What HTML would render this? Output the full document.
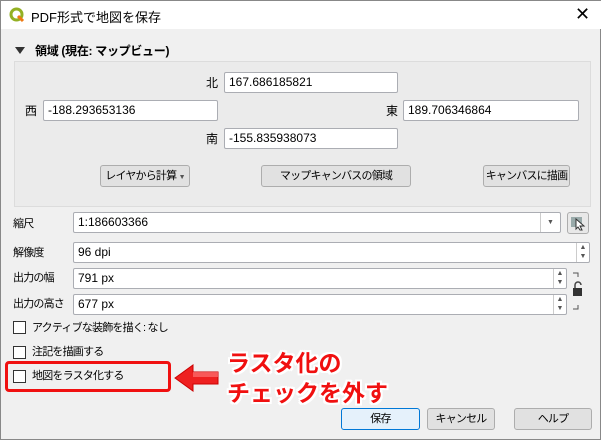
<!DOCTYPE html>
<html><head><meta charset="utf-8"><style>
*{box-sizing:border-box;margin:0;padding:0}
body{width:601px;height:440px;background:#f0f0f0;font-family:"Liberation Sans","Noto Sans CJK JP",sans-serif;font-size:12px;color:#000;position:relative;overflow:hidden;border:1px solid #888}
.a{position:absolute;white-space:nowrap}
.j{font-size:11px;letter-spacing:-0.8px}
.inp{position:absolute;background:#fff;border:1px solid #abadb3;border-radius:2px;height:21px;line-height:19px;padding-left:4px;font-size:12px}
.btn{position:absolute;background:#e1e1e1;border:1px solid #adadad;border-radius:3px;height:22px;line-height:20px;text-align:center;font-size:11px;letter-spacing:-0.8px;white-space:nowrap}
.spin{position:absolute;right:0;top:0;width:13px;height:100%;border-left:1px solid #ccc;font-size:7px;line-height:9px;text-align:center;color:#555;letter-spacing:0}
.cb{position:absolute;width:13px;height:13px;border:1px solid #333;background:#fff}
.red{position:absolute;white-space:nowrap;color:#f01010;font-weight:bold;font-size:23px;letter-spacing:0px;text-shadow:-2px 0 #fff,2px 0 #fff,0 -2px #fff,0 2px #fff,-2px -2px #fff,2px 2px #fff,-2px 2px #fff,2px -2px #fff}
</style></head><body>
<div class="a" style="left:0;top:0;width:601px;height:28px;background:#fff"></div>
<svg class="a" style="left:8px;top:6px" width="16" height="16"><circle cx="7.5" cy="7.5" r="5.5" fill="none" stroke="#93b023" stroke-width="3"/><path d="M9 9 L14 14" stroke="#ee7913" stroke-width="3"/></svg>
<div class="a" style="left:30px;top:6px;font-size:13px">PDF形式で地図を保存</div>
<div class="a" style="left:574px;top:3px;font-size:18px">✕</div>
<svg class="a" style="left:14px;top:46px" width="10" height="8"><path d="M0 0H10L5 7Z" fill="#333"/></svg>
<div class="a" style="left:34px;top:41px;font-weight:bold;font-size:12px;letter-spacing:-0.3px">領域 (現在: マップビュー)</div>
<div class="a" style="left:13px;top:60px;width:577px;height:146px;border:1px solid #dcdcdc;background:#ebebeb"></div>
<div class="a" style="left:205px;top:73px">北</div><div class="inp" style="left:223px;top:71px;width:174px">167.686185821</div>
<div class="a" style="left:24px;top:101px">西</div><div class="inp" style="left:42px;top:99px;width:175px">-188.293653136</div>
<div class="a" style="left:385px;top:101px">東</div><div class="inp" style="left:402px;top:99px;width:176px">189.706346864</div>
<div class="a" style="left:205px;top:129px">南</div><div class="inp" style="left:223px;top:127px;width:174px">-155.835938073</div>
<div class="btn" style="left:99px;top:164px;width:90px">レイヤから計算 <span style="font-size:7px;color:#555">▼</span></div>
<div class="btn" style="left:260px;top:164px;width:150px">マップキャンバスの領域</div>
<div class="btn" style="left:482px;top:164px;width:87px">キャンバスに描画</div>
<div class="a j" style="left:12px;top:214px">縮尺</div>
<div class="inp" style="left:72px;top:211px;width:488px">1:186603366<div class="spin" style="width:20px;line-height:19px">▼</div></div>
<div class="btn" style="left:566px;top:211px;width:22px;height:22px;background:#e8e8e8"><svg width="16" height="16" style="margin-top:2px"><rect x="1" y="2" width="11" height="10" fill="#9aa" /><path d="M6 4L14 11L10 11L12 15L10 15L8 12L6 14Z" fill="#fff" stroke="#333"/></svg></div>
<div class="a j" style="left:12px;top:243px">解像度</div>
<div class="inp" style="left:72px;top:241px;width:517px">96 dpi<div class="spin">▲<br>▼</div></div>
<div class="a j" style="left:12px;top:268px">出力の幅</div>
<div class="inp" style="left:72px;top:267px;width:494px">791 px<div class="spin">▲<br>▼</div></div>
<div class="a j" style="left:12px;top:294px">出力の高さ</div>
<div class="inp" style="left:72px;top:293px;width:494px">677 px<div class="spin">▲<br>▼</div></div>
<svg class="a" style="left:570px;top:270px" width="14" height="40"><path d="M2 2H7V6M2 38H7V34" stroke="#555" fill="none"/><path d="M4 17V14A3 3 0 0 1 10 14" stroke="#444" stroke-width="1.5" fill="none"/><rect x="2" y="17" width="9" height="8" fill="#333"/></svg>
<div class="cb" style="left:12px;top:320px"></div><div class="a j" style="left:31px;top:318px">アクティブな装飾を描く: なし</div>
<div class="cb" style="left:12px;top:345px"></div><div class="a j" style="left:31px;top:342px">注記を描画する</div>
<div class="cb" style="left:12px;top:369px"></div><div class="a j" style="left:31px;top:366px">地図をラスタ化する</div>
<div class="a" style="left:4px;top:360px;width:166px;height:31px;border:3px solid #f01010;border-radius:4px"></div>
<svg class="a" style="left:172px;top:362px" width="48" height="30"><path d="M2 15L20 2V9H45V21H20V28Z" fill="#ee2020" stroke="#c00" stroke-width="1"/><path d="M20 9H45V14H20Z" fill="#ff8080" opacity=".6"/></svg>
<div class="red" style="left:226px;top:343px">ラスタ化の</div>
<div class="red" style="left:226px;top:373px">チェックを外す</div>
<div class="btn" style="left:340px;top:407px;width:79px;border-color:#0078d7;background:#e5f1fb">保存</div>
<div class="btn" style="left:426px;top:407px;width:68px">キャンセル</div>
<div class="btn" style="left:513px;top:407px;width:78px">ヘルプ</div>
</body></html>
